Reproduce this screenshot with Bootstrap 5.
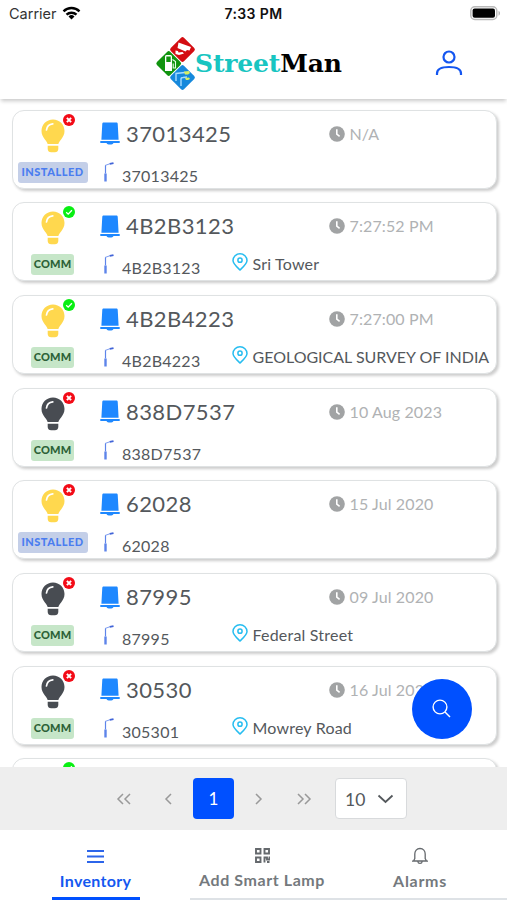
<!DOCTYPE html>
<html lang="en">
<head>
<meta charset="utf-8">
<meta name="viewport" content="width=device-width, initial-scale=1">
<title>StreetMan</title>
<link href="https://cdn.jsdelivr.net/npm/bootstrap@5.3.0/dist/css/bootstrap.min.css" rel="stylesheet">
<style>
body{font-family:Lato,"Open Sans",sans-serif;color:#54585c;width:507px;height:900px;overflow:hidden;background:#fff}
svg{display:block;flex:none}
.statusbar{height:28px;font:15px/28px Inter,sans-serif;color:#111}
.statusbar .clock{font-weight:600;font-size:14px;letter-spacing:.4px}
.carrier{font-size:14.5px;letter-spacing:0;color:#333;margin-left:9px}
.wifi{margin:6px 0 0 5px}
.battery{margin:6px 6px 0 auto}
.brandbar{height:71px;box-shadow:0 3px 4px -1px rgba(0,0,0,.22);z-index:2}
.brandlogo{margin-left:155px}
.brandname{font:bold 25px/30px "DejaVu Serif",serif;letter-spacing:-.17px;color:#000;margin-left:-1px}
.brandname span{color:#18c5c1}
.profile{margin:-1px 0 0 93px}
.lamps{height:668px;padding:10.800px 10px 0 11.500px;gap:13.65px}
.lamp{height:79px;flex:none;border:1px solid #dfe2e3;border-radius:12px;box-shadow:2px 2px 3px rgba(0,0,0,.2);background:#fff}
.state{width:81px;padding:8px 1px 0 0}
.state-dot{left:50px;top:3px}
.tag{font-size:11px;font-weight:900;line-height:20px;height:21px;border-radius:3px;margin-top:9px;text-align:center}
.tag-INSTALLED{width:70px;background:#c4cfe8;color:#4a7df0;letter-spacing:.5px}
.tag-COMM{width:43px;background:#c6e6c8;color:#2c6137;letter-spacing:.2px}
.info{padding-left:6px}
.line1{height:28px;margin-top:9px}
.line2{height:24px;margin-top:13px}
.ident{width:229px}
.serial{font-size:22px;line-height:28px;letter-spacing:.42px;margin-left:6.500px}
.when{font-size:16px;line-height:24px;color:#b0b2b4;letter-spacing:.12px;margin-left:5px}
.pole{width:132px}
.post{margin-top:1px}
.poleid{font-size:16px;line-height:24px;letter-spacing:.26px;margin:3px 0 0 6.500px}
.place{font-size:16px;line-height:24px;margin:-1px 0 0 5px;letter-spacing:.2px}
.place.caps{letter-spacing:-.01px}
.pager{height:63px;background:#eee;color:#999;padding-left:116px}
.pg-now{width:41px;height:41px;border-radius:4px;background:#0050ff;color:#fff;font-size:17px;margin:0 21px}
.pg-prev{margin-left:33px}
.pg-last{margin-left:34px}
.pg-size{width:72px;height:41px;border:1px solid #d8dadc;border-radius:4px;background:#fff;font-size:17.500px;color:#54585c;margin-left:23px;padding:3px 0 0 9px}
.pg-size svg{margin:-3px 0 0 12px}
.tabs{height:70px;font-weight:700;font-size:16px;color:#74797d}
.tab{border-bottom:2px solid #dee2e6}
.tab.on{color:#1458f0;border-bottom:3px solid #0050ff;margin-left:52px;width:88px;padding:20px 1px 0 0;letter-spacing:.3px}
.tab.on div{margin-top:6px}
.tab.add{margin-left:50px;width:144px;padding-top:18px;letter-spacing:.58px}
.tab.add div{margin-top:5px}
.tab.alarm{padding:17px 1px 0 0;letter-spacing:.7px}
.tab.alarm div{margin-top:4px}
.finder{left:412px;top:679px;width:60px;height:60px;background:#0050ff;z-index:3}
.finder svg{margin:-1px 0 0 -1px}
</style>
<script src="https://cdn.jsdelivr.net/npm/bootstrap@5.3.0/dist/js/bootstrap.bundle.min.js"></script>
</head>
<body class="d-flex flex-column position-relative">
<svg width="0" height="0" class="position-absolute">
<symbol id="bulb" viewBox="0 0 24 34"><path fill="currentColor" d="M12 .5C5.500.5.5 5.500.5 12c0 3.400 1.500 6 3.400 8.400 1.500 1.900 2.500 3 2.700 4.600h10.800c.2-1.600 1.200-2.700 2.700-4.600 1.900-2.400 3.400-5 3.400-8.400C23.500 5.500 18.500.5 12 .5zM6.700 26.800h10.600v3.200c0 2-1.500 3.300-3.400 3.300h-3.800c-1.900 0-3.400-1.300-3.400-3.300z"/><path d="M5.500 11c.4-3.500 2.800-5.900 6.300-6.200" fill="none" stroke="#fff" stroke-width="1.700" stroke-linecap="round"/></symbol>
<symbol id="bad" viewBox="0 0 12 12"><circle cx="6" cy="6" r="6" fill="#f30b17"/><path d="M3.900 3.900l4.200 4.200M8.100 3.900L3.900 8.100" stroke="#fff" stroke-width="2"/></symbol>
<symbol id="good" viewBox="0 0 12 12"><circle cx="6" cy="6" r="6" fill="#08ef12"/><path d="M3.200 6.300l2 1.900 3.700-4" fill="none" stroke="#fff" stroke-width="1.300"/></symbol>
<symbol id="node" viewBox="0 0 20 23"><path fill="#1e88ff" d="M3.600.5h12.800c.7 0 1.200.4 1.300 1.100L18.600 17.700H1.400L2.300 1.600C2.400.9 2.900.5 3.600.5zM.3 18.900h19.400v2h-6.200c-.5 1.200-1.700 1.700-3.500 1.700S7 22.100 6.500 20.900H.3z"/></symbol>
<symbol id="post" viewBox="0 0 12 20"><g fill="none" stroke="#5d84ea"><path d="M1.500 19.500V11.500" stroke-width="2.400"/><path d="M1.500 11.500V3.500" stroke-width="1.200"/><path d="M1 3.500L6 1.700" stroke-width=".8"/><path d="M5.800 1.900l3.700-.7" stroke="#4164d8" stroke-width="1.800"/></g></symbol>
<symbol id="time" viewBox="0 0 16 16"><circle cx="8" cy="8" r="7.800" fill="#a1a3a4"/><path d="M7.800 3.300V8.200l2.800 2.200" fill="none" stroke="#fff" stroke-width="1.600"/></symbol>
<symbol id="pin" viewBox="0 0 16 18"><g fill="none" stroke="#27bdf0" stroke-width="1.500"><path d="M8 17C5.500 14.600 1 11 1 7.600a7 6.800 0 0 1 14 0C15 11 10.500 14.600 8 17z"/><circle cx="8" cy="7.200" r="2.100"/></g></symbol>
</svg>

<div class="statusbar d-flex position-relative flex-shrink-0">
  <div class="carrier">Carrier</div>
  <svg class="wifi" width="19" height="14" viewBox="0 0 18 14"><g fill="none" stroke="#000" stroke-width="2.400"><path d="M1 5.300a11.500 11.500 0 0 1 16 0"/><path d="M4 8.700a7.200 7.200 0 0 1 10 0"/></g><path d="M9 13.500l-3-3a4.300 4.300 0 0 1 6 0z"/></svg>
  <div class="clock position-absolute w-100 text-center">7:33 PM</div>
  <svg class="battery" width="31" height="15" viewBox="0 0 31 15"><rect x=".8" y=".8" width="26" height="12.600" rx="4" fill="#fff" stroke="#b9b9b9" stroke-width="1.500"/><rect x="2.600" y="2.500" width="22.400" height="9.200" rx="2"/><path d="M28.500 4.800c2 .8 2 4.200 0 5z" fill="#b5b5b5"/></svg>
</div>

<header class="brandbar d-flex align-items-center bg-white position-relative flex-shrink-0">
  <svg class="brandlogo" width="41" height="56" viewBox="0 0 41 56"><rect x="-9.300" y="-9.300" width="18.600" height="18.600" rx="2" transform="translate(27.500 13.500) rotate(45)" fill="#d40d12"/><rect x="-9.300" y="-9.300" width="18.600" height="18.600" rx="2" transform="translate(13.700 27.500) rotate(45)" fill="#11940f"/><rect x="-9.300" y="-9.300" width="18.600" height="18.600" rx="2" transform="translate(27.500 41.500) rotate(45)" fill="#1689dc"/><path d="M23.500 6.500l12.500 4.500-1.500 3.500-2.500-.5-1.500 1.500-8-3.500zM20.500 14.500l2.500.5.500 1.500 4-.5 1.500 1.500-5 1.500-3.500-1z" fill="#fff"/><path d="M10 20.500q0-1.500 1.500-1.500h4q1.500 0 1.500 1.500V35h-7z" fill="#fff"/><path d="M11.300 20.500h4.400v5.500h-4.400z" fill="#11940f"/><path d="M17.500 23.500l3 2v6.500h-2.300v-4.500" fill="none" stroke="#e6ffe6" stroke-width="1.100"/><path d="M21 45v-7.500l9-1M26 50v-7q0-1.500 2-1.500l4-.5" fill="none" stroke="#a6dcff" stroke-width="1.400"/><path d="M29 35.500l5-.5 1 2-2 1.500h-3zM30 42l4-.5 1 1.500-2 1h-2z" fill="#d8ee62"/></svg>
  <div class="brandname"><span>Street</span>Man</div>
  <svg class="profile" width="28" height="26" viewBox="0 0 28 26" fill="none" stroke="#1456f0" stroke-width="2.200"><circle cx="14" cy="7" r="5.500"/><path d="M2 25v-1.500c0-5 4.500-6.500 12-6.500s12 1.500 12 6.500V25"/></svg>
</header>

<main id="lamps" class="lamps d-flex flex-column overflow-hidden flex-shrink-0"></main>

<nav class="pager d-flex align-items-center flex-shrink-0" aria-label="Pages">
  <svg width="15" height="12" viewBox="0 0 15 12" fill="none" stroke="#999" stroke-width="1.500"><path d="M7 1L2 6l5 5M14 1L9 6l5 5"/></svg>
  <svg class="pg-prev" width="8" height="12" viewBox="0 0 8 12" fill="none" stroke="#999" stroke-width="1.500"><path d="M7 1L2 6l5 5"/></svg>
  <div class="pg-now d-flex align-items-center justify-content-center">1</div>
  <svg width="8" height="12" viewBox="0 0 8 12" fill="none" stroke="#999" stroke-width="1.500"><path d="M1 1l5 5-5 5"/></svg>
  <svg class="pg-last" width="15" height="12" viewBox="0 0 15 12" fill="none" stroke="#999" stroke-width="1.500"><path d="M1 1l5 5-5 5M8 1l5 5-5 5"/></svg>
  <div class="pg-size d-flex align-items-center">10<svg width="17" height="10" viewBox="0 0 17 10" fill="none" stroke="#54585c" stroke-width="1.800"><path d="M1.500 1.500l7 6.500 7-6.500"/></svg></div>
</nav>

<footer class="tabs d-flex bg-white flex-shrink-0">
  <div class="tab on d-flex flex-column align-items-center">
    <svg width="17" height="13" viewBox="0 0 17 13" stroke="#2c65ea" stroke-width="1.800"><path d="M0 1h17M0 6.500h17M0 12h17"/></svg>
    <div>Inventory</div>
  </div>
  <div class="tab add d-flex flex-column align-items-center">
    <svg width="15" height="15" viewBox="0 0 15 15" fill="none" stroke="#65696d" stroke-width="1.900"><path d="M1 1h4.500v4.500H1zM9.500 1H14v4.500H9.500zM1 9.500h4.500V14H1z"/><path d="M9.500 14.500v-5H12v2h2.500v-3M12 14h2.500"/></svg>
    <div class="text-nowrap">Add Smart Lamp</div>
  </div>
  <div class="tab alarm d-flex flex-column align-items-center flex-grow-1">
    <svg width="18" height="18" viewBox="0 0 18 18" fill="none" stroke="#65696d" stroke-width="1.300"><path d="M9 1.500c3.300 0 5.200 2.400 5.200 5.500v4.500l1.300 2.500h-13l1.300-2.500V7C3.800 3.900 5.700 1.500 9 1.500zM1 14.200h16M6.800 14.500c.3 2.600 4.100 2.600 4.400 0"/></svg>
    <div>Alarms</div>
  </div>
</footer>

<button class="finder position-absolute rounded-circle border-0 d-flex align-items-center justify-content-center p-0" aria-label="Search"><svg width="19" height="19" viewBox="0 0 19 19" fill="none" stroke="#fff" stroke-width="1.400"><circle cx="8" cy="8" r="6.900"/><path d="M13 13l5 5"/></svg></button>

<script>
const lamps = [
  ["37013425","37013425","N/A","","INSTALLED","bad","#ffd84e"],
  ["4B2B3123","4B2B3123","7:27:52 PM","Sri Tower","COMM","good","#ffd84e"],
  ["4B2B4223","4B2B4223","7:27:00 PM","GEOLOGICAL SURVEY OF INDIA","COMM","good","#ffd84e"],
  ["838D7537","838D7537","10 Aug 2023","","COMM","bad","#484c52"],
  ["62028","62028","15 Jul 2020","","INSTALLED","bad","#ffd84e"],
  ["87995","87995","09 Jul 2020","Federal Street","COMM","bad","#484c52"],
  ["30530","305301","16 Jul 2020","Mowrey Road","COMM","bad","#484c52"],
  ["","","","","","good","#ffd84e"]
];
const icon = (id, w, h, cls = "") => `<svg width="${w}" height="${h}" class="${cls}"><use href="#${id}"/></svg>`;
document.getElementById("lamps").innerHTML = lamps.map(([serial, pole, when, place, tag, dot, tint]) => `
<article class="lamp d-flex">
  <div class="state position-relative d-flex flex-column align-items-center">
    <div style="color:${tint}">${icon("bulb", 24, 34)}</div>
    ${icon(dot, 12, 12, "state-dot position-absolute")}
    ${tag ? `<div class="tag tag-${tag}">${tag}</div>` : ""}
  </div>
  <div class="info flex-grow-1">
    <div class="line1 d-flex align-items-center">
      <div class="ident d-flex align-items-center">${icon("node", 20, 23)}<span class="serial">${serial}</span></div>
      ${when ? icon("time", 16, 16) + `<span class="when">${when}</span>` : ""}
    </div>
    <div class="line2 d-flex">
      <div class="pole d-flex ps-1">${icon("post", 12, 20, "post")}<span class="poleid">${pole}</span></div>
      ${place ? icon("pin", 16, 18) + `<span class="place text-nowrap ${place === place.toUpperCase() ? "caps" : ""}">${place}</span>` : ""}
    </div>
  </div>
</article>`).join("");
</script>
</body>
</html>
